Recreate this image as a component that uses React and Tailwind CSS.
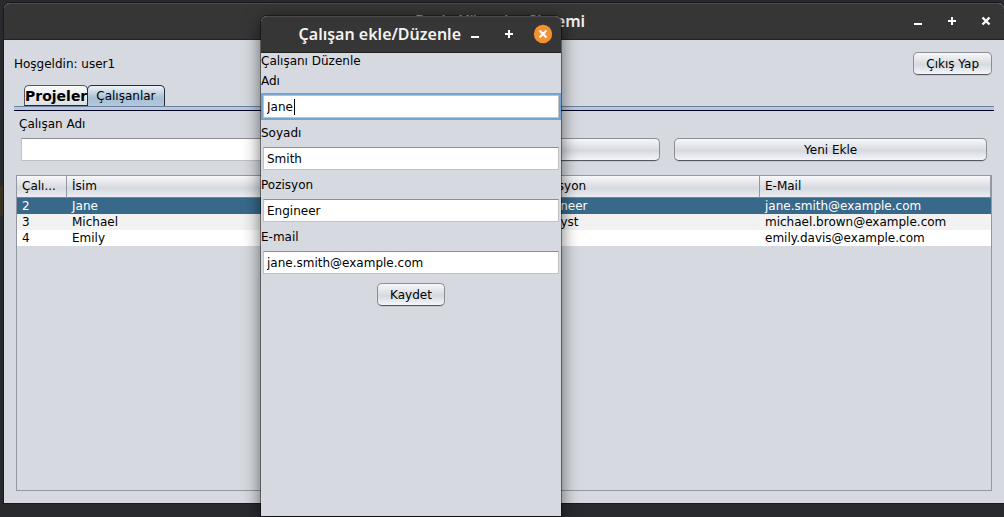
import { useId } from "react";

const rows = [
  { id: 2, name: "Jane", surname: "Smith", position: "Engineer", email: "jane.smith@example.com" },
  { id: 3, name: "Michael", surname: "Brown", position: "Analyst", email: "michael.brown@example.com" },
  { id: 4, name: "Emily", surname: "Davis", position: "HR", email: "emily.davis@example.com" },
];

const rowStyles = ["bg-[#39698a] text-white", "bg-[#f2f2f2]", "bg-white"];

function MinimizeIcon() {
  return (
    <svg viewBox="0 0 20 20" className="size-5" aria-hidden="true">
      <rect x="6" y="12" width="8" height="2" fill="#fff" />
    </svg>
  );
}

function MaximizeIcon() {
  return (
    <svg viewBox="0 0 20 20" className="size-5" aria-hidden="true">
      <path d="M10 6v8M6 10h8" stroke="#fff" strokeWidth="2" fill="none" />
    </svg>
  );
}

function CloseIcon({ active }) {
  return (
    <svg viewBox="0 0 20 20" className="size-5" aria-hidden="true">
      {active && <circle cx="10" cy="10" r="9.2" fill="#f68f2e" />}
      <path d="M6.5 6.5l7 7M13.5 6.5l-7 7" stroke="#fff" strokeWidth="2.4" fill="none" />
    </svg>
  );
}

function TitleBar({ title, active }) {
  return (
    <header className="grid h-[37px] shrink-0 grid-cols-[1fr_auto_1fr] items-center rounded-t-md border-t border-b border-t-[#4a4a4a] border-b-[#222] bg-[#363636] pr-2 pb-px">
      <h1 className="col-start-2 font-['Noto_Sans',sans-serif] text-base leading-6 font-semibold whitespace-nowrap text-[#f2f2f2]">{title}</h1>
      <div className="flex justify-end gap-[14px] pl-1">
        <button type="button" aria-label="Küçült"><MinimizeIcon /></button>
        <button type="button" aria-label="Büyüt"><MaximizeIcon /></button>
        <button type="button" aria-label="Kapat"><CloseIcon active={active} /></button>
      </div>
    </header>
  );
}

function Button({ children }) {
  return (
    <button
      type="button"
      className="h-[23px] rounded-[5px] border border-[#8b8e96] border-b-[#55585f] bg-linear-to-b from-[#f8f8fa] via-[#d6d9df] via-55% to-[#f4f6fc] px-3 whitespace-nowrap shadow-[0_1px_0_#c3c6cc]"
    >
      {children}
    </button>
  );
}

function Field({ label, value, focused }) {
  const id = useId();
  return (
    <div>
      <label htmlFor={id} className="block h-5 leading-5">{label}</label>
      <div className="relative px-[2px] pt-1 pb-[5px]">
        <input
          id={id}
          defaultValue={value}
          className={
            focused
              ? "block h-[23px] w-full border border-[#c0c0c5] bg-white px-[3px] outline-2 outline-[#73a4d1]"
              : "block h-[23px] w-full border border-[#c0c0c5] border-t-[#8d8e93] bg-white px-[3px] outline-none"
          }
        />
        {focused && <span aria-hidden="true" className="absolute top-2 left-[33px] h-4 w-px bg-black" />}
      </div>
    </div>
  );
}

const headerCell =
  "border-r border-b border-r-[#9297a1] border-b-[#7c828c] px-[5px] pb-[2px] text-left font-normal";

export default function App() {
  return (
    <div className="relative h-screen overflow-hidden bg-[#292a2e] bg-[linear-gradient(#3b3220,#3b3220)] bg-[length:4px_30px] bg-[position:0_186px] bg-no-repeat pt-[3px] pb-[14px] pl-1 font-['DejaVu_Sans',sans-serif] text-xs text-black">
      <main className="flex h-full flex-col rounded-t-md bg-[#d6d9df] shadow-[0_0_0_1px_#18191c]">
        <TitleBar title="Proje Yönetim Sistemi" />
        <div className="flex min-h-0 flex-1 flex-col px-[10px] pt-3 pb-3">
          <div className="flex items-center justify-between pr-[2px]">
            <p>Hoşgeldin: user1</p>
            <Button>Çıkış Yap</Button>
          </div>
          <div className="mt-[10px] flex h-[21px] pl-[10px]" role="tablist">
            <button type="button" role="tab" aria-selected="false" className="rounded-t-[5px] border border-[#54575d] border-r-[#1c2f40] border-b-[#1c2f40] bg-linear-to-b from-[#fafafa] to-[#dcdfe5] text-sm leading-5 font-bold">
              Projeler
            </button>
            <button type="button" role="tab" aria-selected="true" className="-ml-px rounded-t-[5px] border border-b-0 border-[#1c2f40] bg-linear-to-b from-[#f0f4f8] via-[#a9bfd2] via-60% to-[#b1c7de] px-2">
              Çalışanlar
            </button>
          </div>
          <div className="h-[5px] shrink-0 border-t border-b border-t-[#70829a] border-b-[#00001c] bg-[#b4cae6]" />
          <section className="flex min-h-0 flex-1 flex-col px-[2px] pt-[3px]" role="tabpanel">
            <label htmlFor="employee-search" className="ml-[3px] h-5 leading-5">Çalışan Adı</label>
            <div className="mt-1 grid grid-cols-3 gap-[14px] px-[5px]">
              <input id="employee-search" className="h-[23px] min-w-0 border border-[#c0c0c5] border-t-[#8d8e93] bg-white px-1" />
              <Button>Ara</Button>
              <Button>Yeni Ekle</Button>
            </div>
            <div className="mt-[14px] min-h-0 flex-1 border border-[#9297a1]">
              <table className="w-full table-fixed border-separate border-spacing-0">
                <thead>
                  <tr className="h-[22px] bg-linear-to-b from-[#f8f8fa] via-[#d6d9df] via-55% to-[#eef0f5]">
                    <th className={`${headerCell} w-[50px]`}>Çalı...</th>
                    <th className={headerCell}>İsim</th>
                    <th className={headerCell}>Soyisim</th>
                    <th className={headerCell}>Pozisyon</th>
                    <th className={headerCell}>E-Mail</th>
                  </tr>
                </thead>
                <tbody>
                  {rows.map((row, i) => (
                    <tr key={row.id} className={rowStyles[i]}>
                      <td className="px-[5px]">{row.id}</td>
                      <td className="px-[5px]">{row.name}</td>
                      <td className="px-[5px]">{row.surname}</td>
                      <td className="px-[5px]">{row.position}</td>
                      <td className="px-[5px]">{row.email}</td>
                    </tr>
                  ))}
                </tbody>
              </table>
            </div>
          </section>
        </div>
      </main>

      <div
        role="dialog"
        aria-label="Çalışan ekle/Düzenle"
        className="absolute top-4 bottom-px left-[261px] flex w-[300px] flex-col rounded-t-md bg-[#d6d9df] shadow-[0_0_0_1px_#0006,0_4px_18px_#0009]"
      >
        <TitleBar title="Çalışan ekle/Düzenle" active />
        <form className="flex flex-col" onSubmit={(event) => event.preventDefault()}>
          <p className="h-[18px] leading-4">Çalışanı Düzenle</p>
          <Field label="Adı" value="Jane" focused />
          <Field label="Soyadı" value="Smith" />
          <Field label="Pozisyon" value="Engineer" />
          <Field label="E-mail" value="jane.smith@example.com" />
          <div className="mt-1 flex justify-center"><Button>Kaydet</Button></div>
        </form>
      </div>
    </div>
  );
}
